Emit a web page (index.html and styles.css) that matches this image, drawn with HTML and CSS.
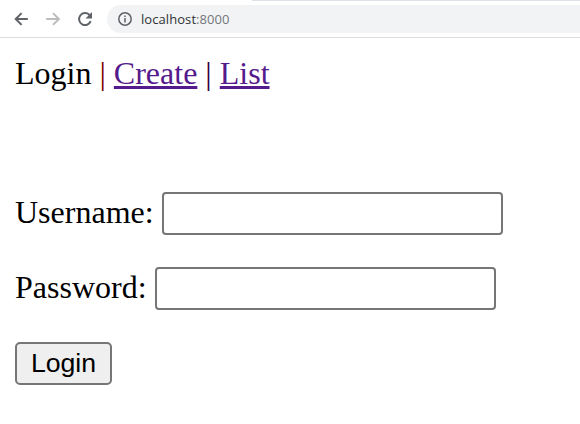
FILE: index.html
```html
<!DOCTYPE html>
<html lang="en">
<head>
<meta charset="utf-8">
<title>Login</title>
<link rel="stylesheet" href="styles.css">
</head>
<body>
<header class="toolbar">
  <svg class="icon" viewBox="0 0 16 16"><path d="M14.8 8H3M8.6 2.1 2.7 8 8.6 13.9"/></svg>
  <svg class="icon muted" viewBox="0 0 16 16"><path d="M1.2 8H13M8 2.1 13.9 8 8 13.9"/></svg>
  <svg class="icon reload" viewBox="0 0 16 16"><path d="M13.7 10.2A6 6 0 1 1 12.3 3.8L13.4 5"/><path class="solid" d="M15 1v6.5H8.5Z"/></svg>
  <div class="address">
    <svg class="info" viewBox="0 0 16 16"><circle cx="8" cy="8" r="6.2"/><path d="M8 7v4.4M8 4.5v1.6"/></svg>
    <span class="url">localhost<span class="port">:8000</span></span>
  </div>
</header>
<main>
  <nav><span>Login</span> <span class="bar first">|</span> <a href="#">Create</a> <span class="bar">|</span> <a href="#">List</a></nav>
  <form>
    <div class="row"><label for="user">Username:</label><input id="user" type="text"></div>
    <div class="row"><label for="pass">Password:</label><input id="pass" type="password"></div>
    <button type="button">Login</button>
  </form>
</main>
</body>
</html>
```
FILE: styles.css
```css
* { box-sizing: border-box; }
body {
  margin: 0;
  height: 424px;
  overflow: hidden;
  background: #fff;
  color: #000;
  font: 32px/37px "Liberation Serif", "Times New Roman", serif;
}
.toolbar {
  display: flex;
  align-items: center;
  height: 38px;
  padding-left: 13px;
  border-bottom: 1px solid #dadce0;
  background: linear-gradient(#dee1e6, #dee1e6) 252px 0 / 328px 1px no-repeat;
}
.icon {
  flex: none;
  width: 16px;
  height: 16px;
  margin-right: 16px;
  fill: none;
  stroke: #5f6368;
  stroke-width: 2;
}
.muted { stroke: #babcbe; }
.reload { margin-right: 14px; }
.solid { fill: #5f6368; stroke: none; }
.address {
  display: flex;
  align-items: center;
  flex: 1;
  height: 28px;
  padding-left: 10px;
  border-radius: 14px 0 0 14px;
  background: #f1f3f4;
}
.info {
  width: 16px;
  height: 16px;
  margin-right: 8px;
  fill: none;
  stroke: #5f6368;
  stroke-width: 1.5;
}
.url {
  color: #303134;
  font: 13px/16px "Open Sans", sans-serif;
  letter-spacing: 0.07px;
}
.port { color: #74777b; }
main { padding: 17px 15px 0; }
nav { height: 37px; }
.bar { color: #30003c; }
.first { color: #800000; }
a {
  color: #551a8b;
  text-decoration-thickness: 3px;
  text-underline-offset: 2px;
}
form { padding-top: 100px; }
.row {
  display: flex;
  align-items: center;
  gap: 8px;
  height: 43px;
  margin-bottom: 32px;
}
label { margin-top: -2px; }
input {
  width: 341px;
  height: 43px;
  padding: 2px 4px;
  border: 2px solid #767676;
  border-radius: 4px;
  background: #fff;
  font: 26.67px "Liberation Sans", Arial, sans-serif;
}
button {
  display: block;
  width: 97px;
  height: 43px;
  padding: 0;
  border: 2px solid #767676;
  border-radius: 5px;
  background: #efefef;
  color: #000;
  font: 26.67px/37px "Liberation Sans", Arial, sans-serif;
}
```
